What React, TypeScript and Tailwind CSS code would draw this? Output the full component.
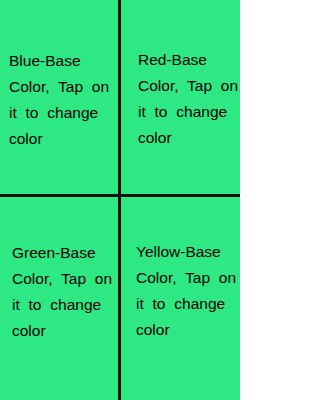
import React from "react";

const Panel = ({ name, className }: { name: string; className: string }) => (
  <div className={`bg-[#2ee884] ${className}`}>
    <p className="w-[110px] text-[15.5px] leading-[26px] text-black [word-spacing:4.5px]">
      {name}-Base Color, Tap on it to change color
    </p>
  </div>
);

export default function App() {
  return (
    <div
      className="grid h-[400px] w-[240px] grid-cols-[118px_119px] grid-rows-[194px_203px] gap-[3px] overflow-hidden bg-[#101010]"
      style={{ fontFamily: '"Liberation Sans", Arial, sans-serif' }}
    >
      <Panel name="Blue" className="pl-[9px] pt-[48px]" />
      <Panel name="Red" className="pl-[17px] pt-[47px]" />
      <Panel name="Green" className="pl-[12px] pt-[43px]" />
      <Panel name="Yellow" className="pl-[15px] pt-[42px]" />
    </div>
  );
}
